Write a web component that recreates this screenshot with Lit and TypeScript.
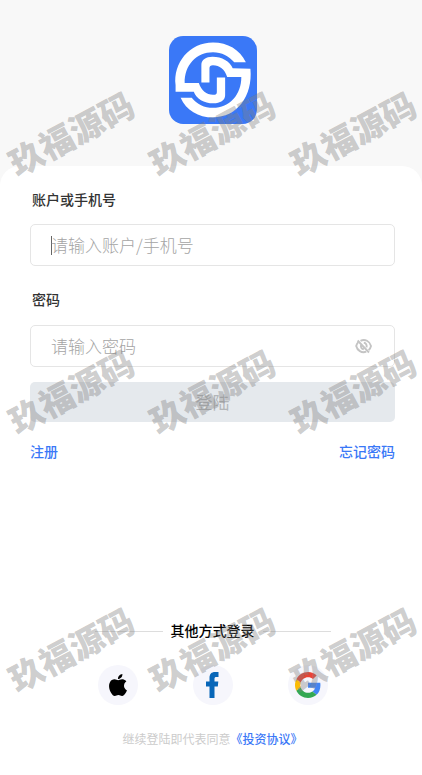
import { LitElement, html, css, svg } from "lit";
import { customElement, state } from "lit/decorators.js";

const WATERMARK_ROWS = [0, 1, 2];
const WATERMARK_COLS = [0, 1, 2];

const logo = svg`
  <rect width="87" height="87" rx="14" fill="#3a78f7"/>
  <g fill="#fff">
    <path d="M6.500 48.500V55H24.500C27 62 34.500 66.500 44 66.500C50.500 66.500 55.500 63.500 55.500 58.500V41H47.300V55C47.300 57.500 46.500 58 43.500 58C37 58 32 54 29.500 46.500H15.500C15 29 27 16 43.500 16C52 16 59.500 20 64.500 26H76C70 13.500 58 6.500 43.500 6.500C20 6.500 4 27 6.500 48.500Z"/>
    <path d="M80.500 32.500C83 60 67 80.500 43.500 80.500C29 80.500 17 73.500 11.500 61H22.500C27.500 67.500 35 71 43.500 71C60 71 71.500 58 71.500 40.500H57.500C55 33 50 29 43.500 29C41 29 40 30 40 32V46H32V28.500C32 23.500 36.500 20.500 43 20.500C52.500 20.500 60 25 63 32Z"/>
  </g>`;

const eyeOff = svg`
  <g fill="none" stroke="#c4c4c4" stroke-width="1.900">
    <path d="M5.500 3.300C10 1 14.800 3.800 16 8.500C15.600 10.300 14.800 11.500 13.700 12.700M11.300 14.200C6.500 15.800 2.300 13 1.200 8.500C1.600 6.900 2.300 5.700 3.300 4.700"/>
    <path d="M2.600 3L14 15M8.800 5.300C11 5.500 12 7.300 11.600 9.800M6 7.700C5.600 9.800 6.600 11.500 8.800 11.700"/>
  </g>`;

const apple = svg`<path fill="#000" d="M12.152 6.896c-.948 0-2.415-1.078-3.960-1.040-2.040.027-3.910 1.183-4.961 3.014-2.117 3.675-.546 9.103 1.519 12.090 1.013 1.454 2.208 3.090 3.792 3.039 1.520-.065 2.090-.987 3.935-.987 1.831 0 2.350.987 3.960.948 1.637-.026 2.676-1.480 3.676-2.948 1.156-1.688 1.636-3.325 1.662-3.415-.039-.013-3.182-1.221-3.220-4.857-.026-3.040 2.480-4.494 2.597-4.559-1.429-2.090-3.623-2.324-4.390-2.376-2-.156-3.675 1.090-4.610 1.090zM15.530 3.830c.843-1.012 1.400-2.427 1.245-3.830-1.207.052-2.662.805-3.532 1.818-.780.896-1.454 2.338-1.273 3.714 1.338.104 2.715-.688 3.559-1.701"/>`;

const facebook = svg`<path fill="#0866b8" d="M3.500 26V14.500H0V9.500H3.500V6C3.500 2 5.500 0 9 0H12.500V5H10.300C9 5 8.500 5.600 8.500 6.900V9.500H12.300L11.800 14.500H8.500V26Z"/>`;

const google = svg`
  <path fill="#EA4335" d="M24 9.500c3.540 0 6.710 1.220 9.210 3.600l6.850-6.850C35.900 2.380 30.470 0 24 0 14.620 0 6.510 5.380 2.560 13.220l7.980 6.190C12.430 13.720 17.740 9.500 24 9.500z"/>
  <path fill="#4285F4" d="M46.980 24.550c0-1.570-.15-3.090-.38-4.550H24v9.020h12.940c-.58 2.960-2.260 5.480-4.780 7.180l7.730 6c4.510-4.180 7.090-10.360 7.090-17.650z"/>
  <path fill="#FBBC05" d="M10.530 28.590c-.48-1.450-.76-2.990-.76-4.590s.27-3.140.76-4.590l-7.980-6.190C.92 16.460 0 20.120 0 24c0 3.880.92 7.540 2.560 10.780l7.970-6.190z"/>
  <path fill="#34A853" d="M24 48c6.480 0 11.930-2.130 15.890-5.810l-7.730-6c-2.150 1.450-4.920 2.300-8.160 2.300-6.260 0-11.570-4.220-13.470-9.910l-7.980 6.190C6.510 42.620 14.620 48 24 48z"/>`;

@customElement("app-root")
export class AppRoot extends LitElement {
  @state() private reveal = false;

  static styles = css`
    :host {
      display: block;
      position: relative;
      overflow: hidden;
      min-height: 100vh;
      background: #f8f8f8;
      font-family: "Noto Sans CJK SC", sans-serif;
      font-size: 14px;
      line-height: 20px;
      color: #333;
    }
    * { box-sizing: border-box; }
    .page { display: flex; flex-direction: column; min-height: 100vh; }
    header { display: flex; justify-content: center; padding: 36px 0 42px 4px; }
    .logo { width: 88px; height: 88px; }
    main {
      flex: 1;
      display: flex;
      flex-direction: column;
      padding: 23px 27px 26px 30px;
      background: #fff;
      border-radius: 20px 20px 0 0;
    }
    form { display: flex; flex-direction: column; }
    label { padding-left: 2px; font-weight: 500; }
    .field {
      display: flex;
      align-items: center;
      height: 42px;
      margin: 15px 0 23px;
      padding: 0 21px 0 20px;
      border: 1px solid #e5e5e5;
      border-radius: 5px;
    }
    .field.last { margin: 16px 0 15px; }
    input {
      flex: 1;
      min-width: 0;
      height: 40px;
      padding: 0 0 2px;
      border: 0;
      outline: 0;
      background: none;
      font: 300 17px "Noto Sans CJK SC", sans-serif;
      color: #333;
    }
    input::placeholder { color: #a4a4a4; opacity: 1; }
    .caret { width: 1px; height: 19px; margin-right: -1px; background: #666; }
    button { border: 0; padding: 0; background: none; font: inherit; }
    .eye { display: flex; width: 18px; height: 18px; }
    .submit {
      height: 40px;
      border-radius: 5px;
      background: #e5e9ed;
      font-size: 17px;
      color: #b3b6b9;
    }
    a { color: #3a78f7; font-weight: 500; text-decoration: none; }
    .links { display: flex; justify-content: space-between; padding-top: 19px; }
    .others { margin-top: auto; display: flex; flex-direction: column; align-items: center; }
    .divider { display: flex; align-items: center; gap: 8px; color: #000; font-weight: 500; }
    .rule { width: 68px; height: 1px; margin-top: 3px; background: #ddd; }
    .social { display: flex; gap: 55px; margin: 25px 0 24px; }
    .social button {
      display: flex;
      align-items: center;
      justify-content: center;
      width: 40px;
      height: 40px;
      border-radius: 50%;
      background: #f6f6fc;
    }
    .terms { margin: 0; font-size: 12px; color: #ccc; }
    .watermarks {
      position: absolute;
      inset: 0;
      overflow: hidden;
      pointer-events: none;
    }
    .row { display: flex; height: 258px; padding-top: 62px; }
    .tile {
      flex: none;
      display: flex;
      align-items: center;
      justify-content: center;
      width: 141px;
      height: 141px;
    }
    .mark {
      flex: none;
      font-size: 34px;
      line-height: 36px;
      font-weight: 900;
      white-space: nowrap;
      color: rgba(128, 128, 128, 0.4);
      transform: rotate(-28deg);
    }
  `;

  render() {
    return html`
      <div class="page">
        <header><svg class="logo" viewBox="0 0 87 87" role="img" aria-label="logo">${logo}</svg></header>
        <main>
          <form @submit=${(e: Event) => e.preventDefault()}>
            <label for="account">账户或手机号</label>
            <div class="field">
              <span class="caret"></span>
              <input id="account" type="text" placeholder="请输入账户/手机号">
            </div>
            <label for="password">密码</label>
            <div class="field last">
              <input id="password" type=${this.reveal ? "text" : "password"} placeholder="请输入密码">
              <button class="eye" type="button" aria-label="显示密码" @click=${() => (this.reveal = !this.reveal)}>
                <svg width="18" height="18" viewBox="0 0 18 17">${eyeOff}</svg>
              </button>
            </div>
            <button class="submit" type="submit">登陆</button>
          </form>
          <nav class="links"><a href="#register">注册</a><a href="#forgot">忘记密码</a></nav>
          <section class="others">
            <div class="divider"><span class="rule"></span>其他方式登录<span class="rule"></span></div>
            <div class="social">
              <button type="button" aria-label="Apple"><svg width="22" height="22" viewBox="0 0 24 24">${apple}</svg></button>
              <button type="button" aria-label="Facebook"><svg width="13" height="26" viewBox="0 0 13 26">${facebook}</svg></button>
              <button type="button" aria-label="Google"><svg width="26" height="26" viewBox="0 0 48 48">${google}</svg></button>
            </div>
            <p class="terms">继续登陆即代表同意<a href="#terms">《投资协议》</a></p>
          </section>
        </main>
      </div>
      <div class="watermarks" aria-hidden="true">
        ${WATERMARK_ROWS.map(() => html`<div class="row">
          ${WATERMARK_COLS.map(() => html`<div class="tile"><span class="mark">玖福源码</span></div>`)}
        </div>`)}
      </div>
    `;
  }
}
